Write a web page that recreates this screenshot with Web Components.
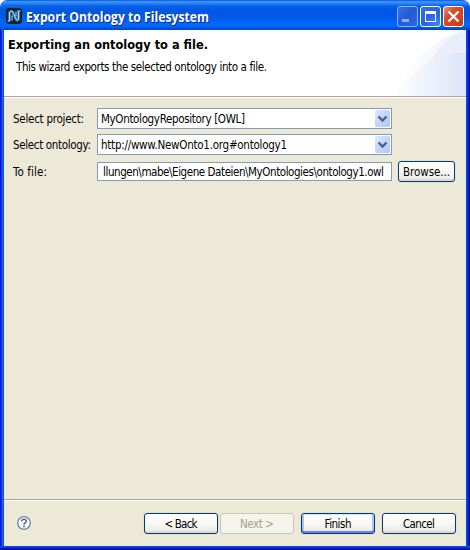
<!DOCTYPE html>
<html lang="en">
<head>
<meta charset="utf-8">
<title>Export Ontology to Filesystem</title>
<style>
body{margin:0;background:#fff;overflow:hidden;font:11.5px "DejaVu Sans Condensed","DejaVu Sans",sans-serif;font-stretch:condensed;color:#000}
</style>
</head>
<body>
<export-wizard></export-wizard>
<script>
const define=(name,html,setup)=>customElements.define(name,class extends HTMLElement{
  connectedCallback(){
    if(this.shadowRoot)return;
    const t=document.createElement('template');t.innerHTML=html;
    this.attachShadow({mode:'open'}).append(t.content.cloneNode(true));
    if(setup)setup(this,this.shadowRoot);
  }
});

/* Single line of text, exactly w pixels wide: spaced, or with "stretch" scaled */
define('fit-text',`<style>:host{display:inline-block;white-space:pre;line-height:16px;height:16px}span{display:inline-block;transform-origin:0 0}</style><span></span>`,(el,root)=>{
  const s=root.querySelector('span');s.textContent=el.getAttribute('text');
  const w=+el.getAttribute('w');
  const n=s.textContent.length, now=s.getBoundingClientRect().width;
  if(el.hasAttribute('stretch'))s.style.transform='scaleX('+w/now+')';
  else s.style.letterSpacing=((w-now)/(n-1))+'px';
  el.style.width=w+'px';
});

define('caption-button',`<style>
:host{display:block;box-sizing:border-box;width:21px;height:21px;border:1px solid #fff;border-radius:3px;background:radial-gradient(circle at 85% 90%,#3d83f5,#2a5fe0 55%,#3c6fe8)}
:host([kind=min]){border-color:#8daef0;background:linear-gradient(135deg,#3d72e2,#235bd6 50%,#2b6be6)}
:host([kind=close]){background:linear-gradient(135deg,#ef8f6f,#dc4a25 35%,#d5411d 70%,#c13a18)}
svg{display:block;width:19px;height:19px}
</style><svg viewBox="0 0 19 19" shape-rendering="crispEdges"></svg>`,(el,root)=>{
  root.querySelector('svg').innerHTML={
    min:'<path d="M4 12h7v3H4z" fill="#8daef5"/>',
    max:'<path d="M4 4h11v11H4zM5 7v7h9V7z" fill="#fff" fill-rule="evenodd"/>',
    close:'<path d="M4.500 4.500l10 10M14.500 4.500l-10 10" stroke="#fff" stroke-width="2.300" shape-rendering="auto"/>'
  }[el.getAttribute('kind')];
});

define('title-bar',`<style>
:host{display:flex;box-sizing:border-box;height:30px;padding:6px 6px 0 6px;border-radius:7px 7px 0 0;
background:linear-gradient(#0842bd 0,#2e86fb 1px,#3c94ff 2px,#227cf6 4px,#0563e8 6px,#0058e2 9px,#0058e6 16px,#0366fb 23px,#0368ff 26px,#0054e0 28px,#0041c8 30px)}
svg{margin:2px 4px 0 0;width:16px;height:16px;flex:none}
fit-text{margin-top:2px;font:bold 13.500px "Open Sans","Noto Sans",sans-serif;color:#fff;text-shadow:1px 1px #0c2a80}
nav{margin-left:auto;display:flex;gap:2px}
</style>
<svg viewBox="0 0 16 16"><path d="M2 0h12l2 2v12l-2 2H2l-2-2V2z" fill="#172126"/><path d="M2 12.500h1.500V4.500Q5 2.500 7 4.500l3 7Q11.500 13 12.500 11V3.500H14" fill="none" stroke="#2470aa" stroke-width="3.200"/><path d="M1.500 13H3l.5-1V4.500L5 3h1l1 1.500 3 6.500 1.500 1.500 1-1.500V4L13 3h1.500M6 12.500V7.500M10 3.500v4.500" fill="none" stroke="#b5e0f7" stroke-width="1"/></svg>
<fit-text stretch text="Export Ontology to Filesystem" w="183"></fit-text>
<nav><caption-button kind="min"></caption-button><caption-button kind="max"></caption-button><caption-button kind="close"></caption-button></nav>`);

define('wizard-header',`<style>
:host{display:grid;box-sizing:border-box;height:68px;border-bottom:1px solid #fff;background:#fff;grid-template:66px 1px/1fr}
section{grid-area:1/1;padding:7px 0 0 4px;display:flex;flex-direction:column;align-items:flex-start}
.h{font:bold 12.5px "DejaVu Sans Condensed","DejaVu Sans",sans-serif;font-stretch:condensed}
.p{margin:6px 0 0 8px}
svg{grid-area:1/1;justify-self:end;width:76px;height:66px}
hr{margin:0;border:0;height:1px;background:#aca899}
</style>
<svg viewBox="0 0 76 66"><defs><linearGradient id="a"><stop offset="0" stop-color="#fff"/><stop offset="1" stop-color="#edf1fb"/></linearGradient><linearGradient id="b"><stop offset="0" stop-color="#fff"/><stop offset=".5" stop-color="#edf1fb"/><stop offset="1" stop-color="#dce4f6"/></linearGradient></defs>
<path d="M4 66Q30 10 76 0V66z" fill="url(#a)"/><path d="M38 36Q52 9 76 0V22Q56 25 38 36z" fill="#e9eefa"/><path d="M4 66Q32 25 76 22V66z" fill="url(#b)"/></svg>
<section><fit-text stretch class="h" text="Exporting an ontology to a file." w="200"></fit-text><fit-text class="p" text="This wizard exports the selected ontology into a file." w="251"></fit-text></section><hr>`);

define('combo-box',`<style>
:host{display:flex;box-sizing:border-box;width:295px;height:21px;border:1px solid #7f9db9;background:#fff;padding:1px 1px 1px 3px;justify-content:space-between}
fit-text{margin-top:1px}
::slotted(fit-text){margin-top:1px}
svg{width:15px;height:17px}
</style><slot></slot><svg viewBox="0 0 15 17"><defs><linearGradient id="g" x2="1" y2="1"><stop stop-color="#e0e9fe"/><stop offset=".5" stop-color="#c3d3fd"/><stop offset="1" stop-color="#aec8f7"/></linearGradient></defs><rect width="15" height="17" rx="1.5" fill="url(#g)"/><path d="M3.500 6.500l4 4 4-4" fill="none" stroke="#4d6185" stroke-width="2.400"/></svg>`);

define('text-field',`<style>
:host{display:block;box-sizing:border-box;width:295px;height:19px;border:1px solid #7f9db9;background:#fff;padding:1px 0 0 5px}
</style><slot></slot>`);

define('push-button',`<style>
:host{display:flex;box-sizing:border-box;width:74px;height:21px;border:1px solid #003c74;border-radius:3px;justify-content:center;padding-top:2px;background:linear-gradient(#fff,#f7f7f3 55%,#eeede7 85%,#d6d0c5);box-shadow:0 0 0 1px #e6e2d3}
:host([disabled]){border-color:#c9c7ba;background:#f5f4ea;color:#a1a192;box-shadow:none}
:host([default]){box-shadow:inset 0 1px #cee7ff,inset 0 -2px #6982ee,inset 2px 0 #a9c3f5,inset -2px 0 #a9c3f5,0 0 0 1px #e6e2d3}
:host([small]){width:57px}
</style><slot></slot>`);

define('help-icon',`<style>:host{display:block;width:14px;height:14px}svg{display:block}</style>
<svg width="14" height="14" viewBox="0 0 14 14"><circle cx="7" cy="7" r="6.300" fill="#fff" stroke="#6c81a1" stroke-width="1.300"/><path d="M4.700 5.500V5Q5 3.300 7 3.300T9.300 5Q9.300 6 8 7 7 7.700 7 8.700" fill="none" stroke="#53688c" stroke-width="1.600"/><path d="M6.100 9.700h1.800v1.600H6.100z" fill="#53688c"/></svg>`);

define('wizard-form',`<style>
:host{display:grid;grid-template:21px 21px 21px/84px 295px 57px;row-gap:5px;padding:10px 0 0 9px;align-items:center}
combo-box{grid-column:2}
text-field,push-button{position:relative;top:1px}
.l{grid-column:1;margin-top:1px}
.last{margin-top:3px}
</style>
<fit-text class="l" text="Select project:" w="71"></fit-text><combo-box><fit-text text="MyOntologyRepository [OWL]" w="144"></fit-text></combo-box>
<fit-text class="l" text="Select ontology:" w="78"></fit-text><combo-box><fit-text text="http://www.NewOnto1.org#ontology1" w="186"></fit-text></combo-box>
<fit-text class="l last" text="To file:" w="34"></fit-text><text-field><fit-text text="llungen\\mabe\\Eigene Dateien\\MyOntologies\\ontology1.owl" w="281"></fit-text></text-field>
<push-button small style="margin-left:6px"><fit-text text="Browse..." w="47"></fit-text></push-button>`);

define('wizard-footer',`<style>
:host{display:flex;box-sizing:border-box;height:47px;border-top:1px solid #aca899;box-shadow:inset 0 1px #fff;padding:13px 10px 0 13px}
help-icon{margin-top:3px}
nav{display:flex;margin-left:auto}
push-button+push-button{margin-left:7px}
push-button[disabled]{margin-left:2px!important}
</style><help-icon></help-icon><nav>
<push-button><fit-text text="&lt; Back" w="33"></fit-text></push-button><push-button disabled><fit-text text="Next &gt;" w="34"></fit-text></push-button><push-button default><fit-text text="Finish" w="27"></fit-text></push-button><push-button><fit-text text="Cancel" w="32"></fit-text></push-button></nav>`);

define('export-wizard',`<style>
:host{display:flex;flex-direction:column;width:470px;height:550px}
main{box-sizing:border-box;height:520px;display:flex;flex-direction:column;padding:0 4px 4px;background:linear-gradient(#ece9d8,#ece9d8) 4px 0/462px 516px no-repeat,
linear-gradient(#0048f1 0 1px,#003de4 1px 2px,#001cb0 2px 3px,#00138c 3px) 0 100%/100% 4px no-repeat,
linear-gradient(90deg,#0019cf 0 1px,#0831d9 1px 2px,#166aee 2px 3px,#0855dd 3px 4px,transparent 4px 466px,#0048f1 466px 467px,#003ddc 467px 468px,#001cb0 468px 469px,#00138c 469px)}
wizard-footer{margin-top:auto}
</style><title-bar></title-bar><main><wizard-header></wizard-header><wizard-form></wizard-form><wizard-footer></wizard-footer></main>`);
</script>
</body>
</html>
